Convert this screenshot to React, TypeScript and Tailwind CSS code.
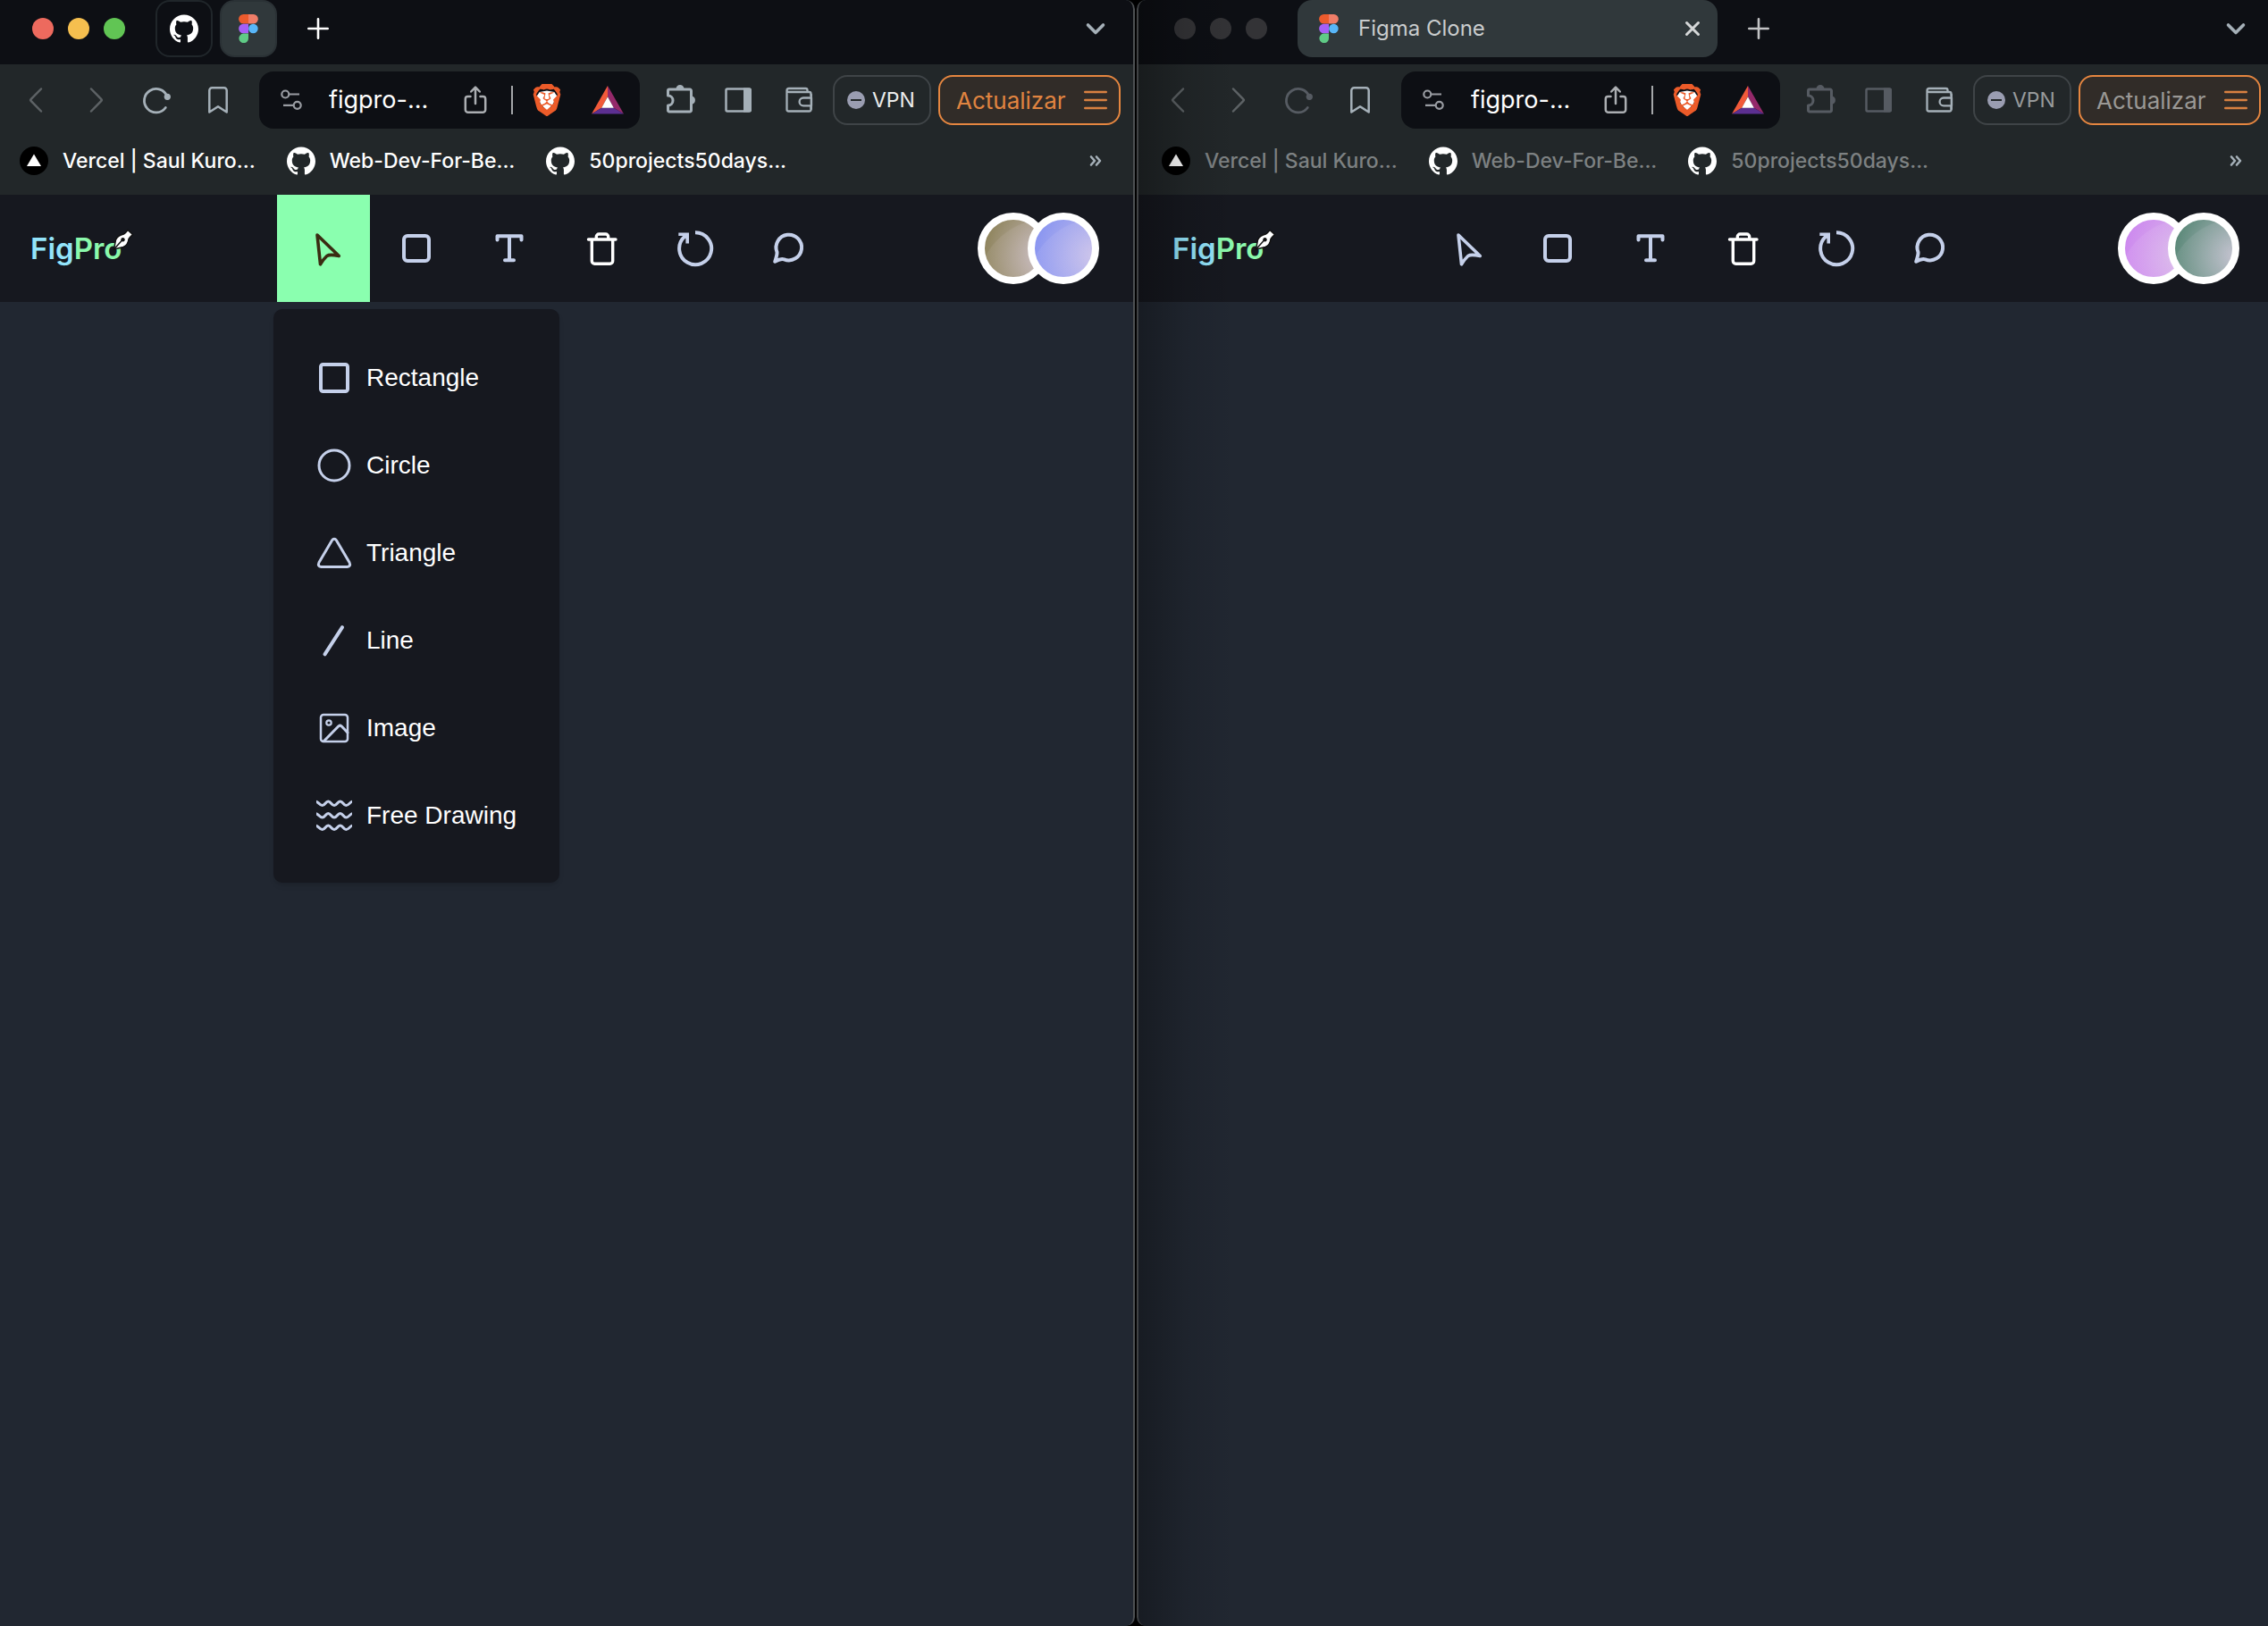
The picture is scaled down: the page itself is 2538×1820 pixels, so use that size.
import type { ReactNode } from "react";
import { SiBrave, SiGithub } from "react-icons/si";

/* ---------- Browser icons ---------- */

function FigmaMark() {
  return (
    <svg className="h-8 w-[22px] shrink-0" viewBox="0 0 22 32" aria-hidden="true">
      <path d="M5.3 0H11v10.4H5.3a5.2 5.2 0 0 1 0-10.4z" fill="#ec5b2d" />
      <path d="M11 0h5.6a5.2 5.2 0 0 1 0 10.4H11z" fill="#ef7d68" />
      <path d="M5.3 10.8H11v10.4H5.3a5.2 5.2 0 0 1 0-10.4z" fill="#a65ff5" />
      <circle cx="16.4" cy="16" r="5.3" fill="#58b6f8" />
      <path d="M5.3 21.6H11v5.1a5.3 5.3 0 1 1-5.7-5.1z" fill="#5fcb86" />
    </svg>
  );
}

function Glyph({ children, className }: { children: ReactNode; className: string }) {
  return (
    <svg
      className={className}
      viewBox="0 0 36 36"
      width="36"
      height="36"
      fill="none"
      stroke="currentColor"
      strokeWidth="2.5"
      strokeLinecap="round"
      strokeLinejoin="round"
      aria-hidden="true"
    >
      {children}
    </svg>
  );
}

function ToolButton({ label, className, children }: { label: string; className: string; children: ReactNode }) {
  return (
    <button type="button" aria-label={label} className={`flex h-16 shrink-0 items-center justify-center ${className}`}>
      {children}
    </button>
  );
}

/* ---------- Browser chrome ---------- */

function TabBar({ active }: { active: boolean }) {
  return (
    <header className="flex h-[72px] items-start bg-[#0d0f14] pl-[42px] pr-[26px]">
      <div className="flex h-16 items-center gap-4">
        <button type="button" aria-label="Close window" className={`size-6 rounded-full ${active ? "bg-[#ed6a5e]" : "bg-[#333336]"}`} />
        <button type="button" aria-label="Minimize window" className={`size-6 rounded-full ${active ? "bg-[#f5bf4f]" : "bg-[#333336]"}`} />
        <button type="button" aria-label="Zoom window" className={`size-6 rounded-full ${active ? "bg-[#61c554]" : "bg-[#333336]"}`} />
      </div>
      {active ? (
        <div className="ml-[34px] flex gap-2">
          <button type="button" aria-label="GitHub tab" className="flex size-16 items-center justify-center rounded-2xl border-2 border-[#20262a] text-white">
            <SiGithub className="size-8" />
          </button>
          <button type="button" aria-label="Figma Clone tab" className="flex size-16 items-center justify-center rounded-2xl border-2 border-[#2a3135] bg-[#30383b]">
            <FigmaMark />
          </button>
        </div>
      ) : (
        <div className="ml-[34px] flex h-16 w-[470px] items-center rounded-2xl bg-[#30383b] pl-6 pr-[18px]">
          <FigmaMark />
          <span className="ml-[22px] flex-1 text-2xl text-[#c9cccd]">Figma Clone</span>
          <button type="button" aria-label="Close tab">
            <svg className="size-5" viewBox="0 0 20 20" fill="none" stroke="#d5d7d8" strokeWidth="3" strokeLinecap="round" aria-hidden="true">
              <path d="M3.5 3.5l13 13M16.5 3.5l-13 13" />
            </svg>
          </button>
        </div>
      )}
      <button type="button" aria-label="New tab" className="ml-7 flex h-16 w-9 items-center justify-center">
        <svg className="size-6" viewBox="0 0 24 24" fill="none" stroke={active ? "#ffffff" : "#c2c3c5"} strokeWidth="2.6" strokeLinecap="round" aria-hidden="true">
          <path d="M12 1.3v21.4M1.3 12h21.4" />
        </svg>
      </button>
      <button type="button" aria-label="Search tabs" className="ml-auto flex h-16 w-9 items-center justify-center">
        <svg className="h-4 w-6" viewBox="0 0 24 16" fill="none" stroke="#a5b0b8" strokeWidth="3.6" strokeLinecap="round" strokeLinejoin="round" aria-hidden="true">
          <path d="M3.5 4l8.5 8.5L20.5 4" />
        </svg>
      </button>
    </header>
  );
}

function AddressBar() {
  return (
    <div className="ml-3 flex h-16 min-w-0 flex-1 items-center rounded-2xl bg-[#0d0f14] pl-6 pr-[18px]">
      <button type="button" aria-label="Site settings" className="shrink-0">
        <svg className="size-6" viewBox="0 0 24 24" fill="none" stroke="#999ca2" strokeWidth="2.2" aria-hidden="true">
          <circle cx="5.3" cy="5.5" r="4" />
          <path d="M9.5 5.5H21M3 17.8h11.5" />
          <circle cx="18.7" cy="17.8" r="4" />
        </svg>
      </button>
      <input
        type="text"
        readOnly
        aria-label="Address"
        value="figpro-..."
        className="ml-[30px] h-10 w-0 flex-1 bg-transparent text-[27px] text-white outline-none"
      />
      <button type="button" aria-label="Share" className="shrink-0 text-[#abaeb2]">
        <Glyph className="size-9">
          <path d="M12.5 14H9.5a2.7 2.7 0 0 0-2.7 2.7v12a3 3 0 0 0 3 3h16.4a3 3 0 0 0 3-3v-12A2.7 2.7 0 0 0 26.5 14h-3M18 22V4.5M13.2 8.5L18 3.6l4.8 4.9" />
        </Glyph>
      </button>
      <span className="ml-[22px] h-8 w-0.5 shrink-0 bg-[#a5a7aa]" />
      <button type="button" aria-label="Brave Shields" className="ml-5 flex size-9 shrink-0 items-center justify-center">
        <svg className="size-9" viewBox="0 0 24 24" aria-hidden="true">
          <path d="M6.5 6L12 5l5.5 1 2 3-3 6-4.5 5-4.5-5-3-6z" fill="#fff" />
          <SiBrave size={24} color="#ec5b29" />
        </svg>
      </button>
      <button type="button" aria-label="Brave Rewards" className="ml-8 shrink-0">
        <svg className="h-8 w-9" viewBox="0 0 36 32" aria-hidden="true">
          <path d="M18 0L0 31.5l11.5-7L18 12z" fill="#f15a3a" />
          <path d="M18 0l18 31.5-11.5-7L18 12z" fill="#94296a" />
          <path d="M0 31.5h36l-11.5-7h-13z" fill="#5c2f91" />
          <path d="M18 12.3l6.8 12.5H11.2z" fill="#fff" />
        </svg>
      </button>
    </div>
  );
}

function Toolbar({ active }: { active: boolean }) {
  const faded = active ? "text-[#a5b0b8]" : "text-[#565b62]";
  return (
    <div className="flex h-20 items-center bg-[#222729] pl-3 pr-4">
      <ToolButton label="Back" className="w-[68px] text-[#5d6265]">
        <Glyph className="size-9"><path d="M24 5.5L12.600 17.200q-1 .8 0 1.600L24 30.500" /></Glyph>
      </ToolButton>
      <ToolButton label="Forward" className="w-[68px] text-[#5d6265]">
        <Glyph className="size-9"><path d="M12 5.500l11.400 11.700q1 .8 0 1.600L12 30.500" /></Glyph>
      </ToolButton>
      <ToolButton label="Reload" className={`w-[68px] ${faded}`}>
        <Glyph className="size-9">
          <path d="M29 14A13.200 13.200 0 1 0 27.300 26.500" strokeWidth="2.8" />
          <circle cx="29.3" cy="14.3" r="3.6" fill="currentColor" stroke="none" />
        </Glyph>
      </ToolButton>
      <ToolButton label="Bookmark" className="w-[68px] text-[#a5b0b8]">
        <Glyph className="size-9"><path d="M8.3 7.2a3 3 0 0 1 3-3h13.4a3 3 0 0 1 3 3V31.5L18 25.2 8.3 31.5z" /></Glyph>
      </ToolButton>
      <AddressBar />
      <ToolButton label="Extensions" className={`ml-[13px] w-[66px] ${faded}`}>
        <Glyph className="size-9">
          <path d="M3.5 13V7.500a1.500 1.500 0 0 1 1.500-1.500H28a1.500 1.500 0 0 1 1.500 1.500V29.500a1.500 1.500 0 0 1-1.500 1.500H5a1.500 1.500 0 0 1-1.500-1.500V24a5.500 5.500 0 0 0 0-11z" strokeWidth="3" />
          <path d="M12.500 5.500a4.500 4.500 0 0 1 9 0zM30.500 13.500a4.800 4.800 0 0 1 0 9.200z" fill="currentColor" stroke="none" />
        </Glyph>
      </ToolButton>
      <ToolButton label="Sidebar" className={`w-[66px] ${faded}`}>
        <Glyph className="size-9">
          <rect x="2.5" y="5.5" width="27" height="25" rx="1.5" />
          <path d="M22 4.500h7a2 2 0 0 1 2 2v23a2 2 0 0 1-2 2h-7z" fill="currentColor" stroke="none" />
        </Glyph>
      </ToolButton>
      <ToolButton label="Wallet" className="w-[66px] text-[#a5b0b8]">
        <Glyph className="size-9">
          <path d="M31.500 13V11a2 2 0 0 0-2-2H7Q4.500 8.500 4.500 7.500V28.500a2 2 0 0 0 2 2H29.500a2 2 0 0 0 2-2V25M4.500 7.500q0-2.500 2.500-2.500H25.500a2 2 0 0 1 2 2V9" strokeWidth="2.3" />
          <path d="M32 15.500H23a4.300 4.300 0 0 0 0 8.800h9zM31.800 12v16" strokeWidth="2.3" />
        </Glyph>
      </ToolButton>
      <button
        type="button"
        className={`ml-[5px] flex h-14 w-[110px] shrink-0 items-center rounded-2xl border-2 border-[#3f4447] pl-3.5 text-[23px] ${active ? "text-[#ebecec]" : "text-[#979a9b]"}`}
      >
        <span className="mr-2 flex size-5 items-center justify-center rounded-full bg-[#9a9db1]">
          <span className="h-0.5 w-3 bg-[#222729]" />
        </span>
        VPN
      </button>
      <button
        type="button"
        className={`ml-2 flex h-14 w-[204px] shrink-0 items-center justify-between rounded-2xl border-2 border-[#e58640] bg-[#312c28] pl-[18px] pr-[13px] text-[26px] ${active ? "text-[#e08440]" : "text-[#9a9895]"}`}
      >
        Actualizar
        <svg className="h-6 w-[26px]" viewBox="0 0 26 24" stroke="#d98141" strokeWidth="2.4" strokeLinecap="round" aria-hidden="true">
          <path d="M1.200 3h23.600M1.200 12h23.600M1.200 21h23.600" />
        </svg>
      </button>
    </div>
  );
}

function Bookmarks({ active }: { active: boolean }) {
  return (
    <nav
      aria-label="Bookmarks"
      className={`flex h-[66px] items-center gap-[35px] bg-[#222729] pb-2.5 pl-7 pr-9 text-[23px] font-medium ${active ? "text-white" : "text-[#7d8182]"}`}
    >
      <a href="#vercel" className="flex items-center gap-4 whitespace-nowrap">
        <svg className="size-8" viewBox="0 0 32 32" aria-hidden="true">
          <circle cx="16" cy="16" r="16" fill="#000" />
          <path d="M16 8.500l8 13.500H8z" fill="#fff" />
        </svg>
        Vercel | Saul Kuro...
      </a>
      <a href="#web-dev" className="flex items-center gap-4 whitespace-nowrap">
        <SiGithub className="size-8 text-white" />
        Web-Dev-For-Be...
      </a>
      <a href="#50projects" className="flex items-center gap-4 whitespace-nowrap">
        <SiGithub className="size-8 text-white" />
        50projects50days...
      </a>
      <button type="button" aria-label="More bookmarks" className="ml-auto">
        <svg className="size-4" viewBox="0 0 16 16" fill="none" stroke="#a5b0b8" strokeWidth="2.6" strokeLinecap="round" strokeLinejoin="round" aria-hidden="true">
          <path d="M3 3.500L7 8l-4 4.500M9 3.500L13 8l-4 4.500" />
        </svg>
      </button>
    </nav>
  );
}

/* ---------- FigPro application ---------- */

function Logo() {
  return (
    <a href="#home" aria-label="FigPro" className="relative flex w-[116px] text-[33px] font-semibold leading-10">
      <span className="text-[#93e4fb]">Fig</span>
      <span className="text-[#8bf9ac]">Pro</span>
      <svg className="absolute -top-0.5 right-0 h-6 w-6" viewBox="0 0 24 24" aria-hidden="true">
        <path d="M1.500 23L3.500 12.500Q5.500 7.500 12.500 6L14.500 4.500 17 1.500 22.500 6.500 19.500 9.500 18 11.500Q17.500 18 12 20.500z" fill="#fff" stroke="#111" strokeWidth="1.5" />
        <path d="M1.500 23L11 12.500" stroke="#111" strokeWidth="1.5" />
        <circle cx="11.5" cy="12.3" r="2.2" fill="#111" />
      </svg>
    </a>
  );
}

function NavIcon({ children }: { children: ReactNode }) {
  return (
    <svg className="size-11" viewBox="0 0 44 44" fill="none" stroke="currentColor" strokeWidth="4" strokeLinecap="round" strokeLinejoin="round" aria-hidden="true">
      {children}
    </svg>
  );
}

const tools = [
  { name: "Rectangle", icon: <rect x="8" y="8" width="28" height="28" rx="4" /> },
  { name: "Text", icon: <path d="M8.500 12.500V8.200h27v4.300M22 8.200V35M17 35.300h10" /> },
  {
    name: "Delete",
    white: true,
    icon: <path d="M6.500 12h30.500M10.300 12.500V36a3.200 3.200 0 0 0 3.200 3.200h17a3.200 3.200 0 0 0 3.200-3.200V12.500M15.300 11.500V9a3 3 0 0 1 3-3h7.400a3 3 0 0 1 3 3v2.500" strokeWidth="3.4" />,
  },
  {
    name: "Reset",
    icon: (
      <>
        <path d="M22 4.200A18 18 0 1 1 9.500 9.400L12 7" strokeLinecap="butt" />
        <path d="M3.300 4.500H15v12h-3.600V11L8 8H3.300z" fill="currentColor" stroke="none" />
      </>
    ),
  },
  { name: "Comments", icon: <path d="M17.500 34.300A14.300 14.300 0 1 0 9.500 26.300Q9.800 29 7.200 36.800 13.500 33 17.500 34.300z" /> },
];

const shapes = [
  { name: "Rectangle", icon: <rect x="5" y="5" width="30" height="30" rx="2.5" strokeWidth="4" /> },
  { name: "Circle", icon: <circle cx="20" cy="20" r="17" /> },
  { name: "Triangle", icon: <path d="M17.300 6.200Q20 2.500 22.700 6.200L37 30.500Q39 35 34.500 35.400H5.500Q1 35 3 30.500z" /> },
  { name: "Line", icon: <path d="M9.500 35.300L29 5.200" strokeWidth="4" /> },
  {
    name: "Image",
    icon: (
      <>
        <rect x="5" y="5" width="30" height="30" rx="3" strokeWidth="2.5" />
        <circle cx="14" cy="14" r="2.7" strokeWidth="2.2" />
        <path d="M8.500 34.500L24.900 17.800q1.600-1.300 3.200 0L35 25" />
      </>
    ),
  },
  {
    name: "Free Drawing",
    icon: (
      <path d="M-1 4C2 4 3.500 8.500 6.700 8.500S10.200 4 13.300 4 16.800 8.500 20 8.500 23.500 4 26.700 4 30.200 8.500 33.300 8.500 38 4 41 4M-1 17.500C2 17.500 3.500 22 6.700 22S10.200 17.500 13.300 17.500 16.800 22 20 22 23.500 17.500 26.700 17.500 30.200 22 33.300 22 38 17.500 41 17.500M-1 31C2 31 3.500 35.500 6.700 35.500S10.200 31 13.300 31 16.800 35.500 20 35.500 23.500 31 26.700 31 30.200 35.500 33.300 35.500 38 31 41 31" />
    ),
  },
];

function ShapeMenu() {
  return (
    <ul className="absolute -left-1 top-[128px] z-10 w-80 rounded-[10px] bg-[#16181f] pb-[26px] pt-7 shadow-md">
      {shapes.map((shape) => (
        <li key={shape.name}>
          <button type="button" className="flex h-[98px] w-full items-center gap-4 whitespace-nowrap px-12 font-['Liberation_Sans',sans-serif] text-[28px] text-white">
            <svg className="size-10 shrink-0 text-[#c5d0ea]" viewBox="0 0 40 40" fill="none" stroke="currentColor" strokeWidth="3" strokeLinecap="round" strokeLinejoin="round" aria-hidden="true">
              {shape.icon}
            </svg>
            {shape.name}
          </button>
        </li>
      ))}
    </ul>
  );
}

const avatarShine =
  "bg-[radial-gradient(circle_at_100%_110%,rgba(255,240,255,0.1)_0,rgba(255,240,255,0.08)_68%,transparent_69%),radial-gradient(circle_at_95%_60%,rgba(222,208,230,0.8),rgba(222,208,230,0.35)_50%,transparent_90%)]";

function Avatars({ active }: { active: boolean }) {
  return (
    <div className="flex">
      <div className={`size-20 rounded-full border-8 border-white bg-origin-border ${avatarShine} ${active ? "bg-[#857b4c]" : "bg-[#cb80f0]"}`} />
      <div className={`-ml-6 size-20 rounded-full border-8 border-white bg-origin-border ${avatarShine} ${active ? "bg-[#7f8ef2]" : "bg-[#4b806b]"}`} />
    </div>
  );
}

function AppNav({ active }: { active: boolean }) {
  return (
    <nav aria-label="Tools" className="flex h-[120px] items-center justify-between bg-[#16181f] px-10">
      <Logo />
      <ul className="flex">
        <li className="relative">
          <button type="button" aria-label="Select" className={`flex h-[120px] w-[104px] items-center justify-center ${active ? "bg-[#8affaf] text-[#3a2c12]" : "text-[#c5d0ea]"}`}>
            <NavIcon>
              <path d="M15 7L39.300 30.500Q29 28.300 25.800 30.500 22 34 18.500 39.800z" strokeWidth="3.6" />
            </NavIcon>
          </button>
          {active && <ShapeMenu />}
        </li>
        {tools.map((tool) => (
          <li key={tool.name}>
            <button type="button" aria-label={tool.name} className={`flex h-[120px] w-[104px] items-center justify-center ${tool.white ? "text-white" : "text-[#c5d0ea]"}`}>
              <NavIcon>{tool.icon}</NavIcon>
            </button>
          </li>
        ))}
      </ul>
      <Avatars active={active} />
    </nav>
  );
}

function BrowserWindow({ active }: { active: boolean }) {
  return (
    <section
      className={`relative flex min-w-0 flex-col overflow-hidden bg-[#212731] ${active ? "flex-[1270] rounded-r-[10px]" : "flex-[1266] rounded-l-[10px]"}`}
    >
      {/* Each window runs slightly past the outer edge of the screen. */}
      <div className={active ? "-ml-1.5" : "-mr-2"}>
        <TabBar active={active} />
        <Toolbar active={active} />
        <Bookmarks active={active} />
        <AppNav active={active} />
      </div>
      <main aria-label="Canvas" className="flex-1" />
      {!active && (
        <div className="pointer-events-none absolute inset-y-0 left-0 w-[110px] bg-linear-to-r from-black/30 via-black/10 to-transparent" />
      )}
      <div
        className={`pointer-events-none absolute inset-0 ${active ? "rounded-r-[10px] border-r-2 border-[#4d5052]" : "rounded-l-[10px] border-l-2 border-[#404244]"}`}
      />
    </section>
  );
}

export default function App() {
  return (
    <div className="flex min-h-screen gap-0.5 bg-black font-[Inter,sans-serif]">
      <BrowserWindow active />
      <BrowserWindow active={false} />
    </div>
  );
}
